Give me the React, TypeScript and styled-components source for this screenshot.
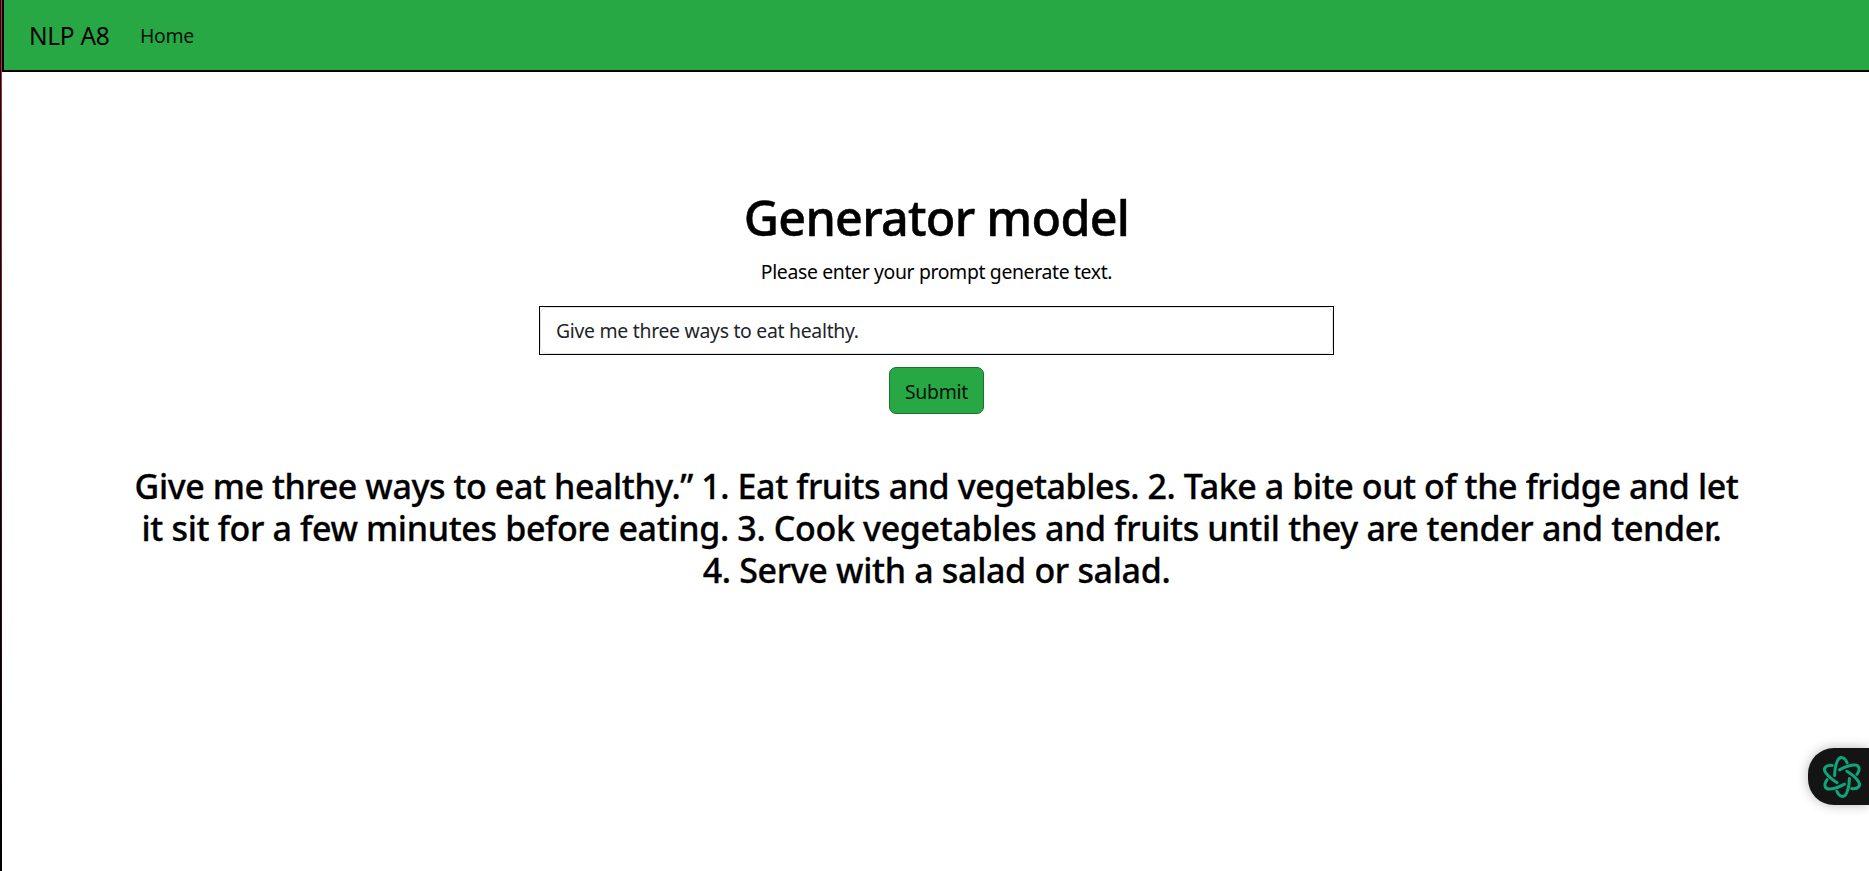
import React from 'react';
import styled, { createGlobalStyle } from 'styled-components';

const GlobalStyle = createGlobalStyle`
  *, *::before, *::after { box-sizing: border-box; }
  body {
    margin: 0;
    background: #fff;
    color: #000;
    font-family: "Noto Sans", "Open Sans", sans-serif;
    font-size: 19.4px;
    line-height: 30px;
    letter-spacing: -0.35px;
  }
`;

const Shell = styled.div`
  display: flex;
  height: 871px;
  overflow: hidden;
`;

const Edge = styled.div`
  flex: none;
  width: 2px;
  padding-left: 1px;
  background: #000;
`;

const EdgeGlow = styled.div`
  height: 100%;
  background: linear-gradient(#d4254f, #a01c3c 25%, #5a0d22 55%, #000 95%);
`;

const Page = styled.div`
  flex: 1;
  min-width: 0;
`;

const Navbar = styled.nav`
  display: flex;
  align-items: center;
  height: 72px;
  padding-left: 25px;
  background: #28a745;
  border-left: 2px solid #000;
  border-bottom: 2px solid #000;
`;

const Brand = styled.a`
  width: 111px;
  padding-top: 1px;
  font-size: 24.5px;
  letter-spacing: -0.3px;
  white-space: nowrap;
`;

const NavLink = styled.a`
  padding-top: 2px;
  color: #03130a;
`;

const Main = styled.main`
  display: flex;
  flex-direction: column;
  align-items: center;
  padding: 115px 0 0 2px;
  text-align: center;
`;

const Title = styled.h1`
  margin: 0;
  font-size: 48.5px;
  font-weight: 500;
  line-height: 60px;
  letter-spacing: -0.75px;
  -webkit-text-stroke: 0.5px #000;
`;

const Hint = styled.p`
  margin: 10px 0 19px;
`;

const PromptForm = styled.form`
  display: flex;
  flex-direction: column;
  align-items: center;
  gap: 12px;
`;

const PromptFrame = styled.div`
  width: 795px;
  height: 49px;
  border: 1px solid #000;
`;

const PromptInput = styled.input`
  display: block;
  width: 100%;
  height: 100%;
  padding: 0 15px;
  border: 1px solid #dee2e6;
  border-radius: 7px;
  outline: none;
  background: #fff;
  color: #212529;
  font: inherit;
  letter-spacing: -0.29px;
`;

const SubmitButton = styled.button`
  width: 95px;
  height: 47px;
  padding: 2px 0 0;
  border: 1px solid #19732f;
  border-radius: 7px;
  background: #28a745;
  color: #03130a;
  font: inherit;
  letter-spacing: -0.25px;
`;

const Result = styled.h3`
  margin: 51px 0 0;
  font-size: 34px;
  font-weight: 500;
  line-height: 42px;
  -webkit-text-stroke: 0.3px #000;
`;

const ResultLine = styled.span<{ $tracking: number; $trailing?: number }>`
  display: block;
  padding-right: ${({ $trailing = 0 }) => $trailing}px;
  white-space: nowrap;
  letter-spacing: ${({ $tracking }) => $tracking}px;
`;

const AssistantTab = styled.aside`
  position: fixed;
  top: 748px;
  right: 0;
  display: flex;
  align-items: center;
  width: 61px;
  height: 57px;
  padding-left: 12px;
  border-radius: 26px 0 0 26px;
  background: #141414;
  box-shadow: 0 0 12px rgba(0, 0, 0, 0.28);
`;

const petal = 'M-7.4 -1.4C-7.3 -7 -6.4 -12 -4.6 -16C-2.4 -21 2.4 -20.6 5.2 -14.2';

const AssistantIcon = () => (
  <svg width="44" height="44" viewBox="-22 -22 44 44" fill="none" stroke="#0da57c" strokeWidth="3" strokeLinecap="round">
    {[0, 60, 120, 180, 240, 300].map((angle) => (
      <path key={angle} d={petal} transform={`rotate(${angle})`} />
    ))}
  </svg>
);

const resultLines = [
  { text: 'Give me three ways to eat healthy.” 1. Eat fruits and vegetables. 2. Take a bite out of the fridge and let', tracking: -0.42 },
  { text: 'it sit for a few minutes before eating. 3. Cook vegetables and fruits until they are tender and tender.', tracking: -0.34, trailing: 10 },
  { text: '4. Serve with a salad or salad.', tracking: -0.33 },
];

export default function App() {
  return (
    <>
      <GlobalStyle />
      <Shell>
        <Edge>
          <EdgeGlow />
        </Edge>
        <Page>
          <Navbar>
            <Brand>NLP A8</Brand>
            <NavLink>Home</NavLink>
          </Navbar>
          <Main>
            <Title>Generator model</Title>
            <Hint>Please enter your prompt generate text.</Hint>
            <PromptForm>
              <PromptFrame>
                <PromptInput defaultValue="Give me three ways to eat healthy." />
              </PromptFrame>
              <SubmitButton type="button">Submit</SubmitButton>
            </PromptForm>
            <Result>
              {resultLines.map(({ text, tracking, trailing }) => (
                <ResultLine key={text} $tracking={tracking} $trailing={trailing}>{text}</ResultLine>
              ))}
            </Result>
          </Main>
        </Page>
      </Shell>
      <AssistantTab>
        <AssistantIcon />
      </AssistantTab>
    </>
  );
}
